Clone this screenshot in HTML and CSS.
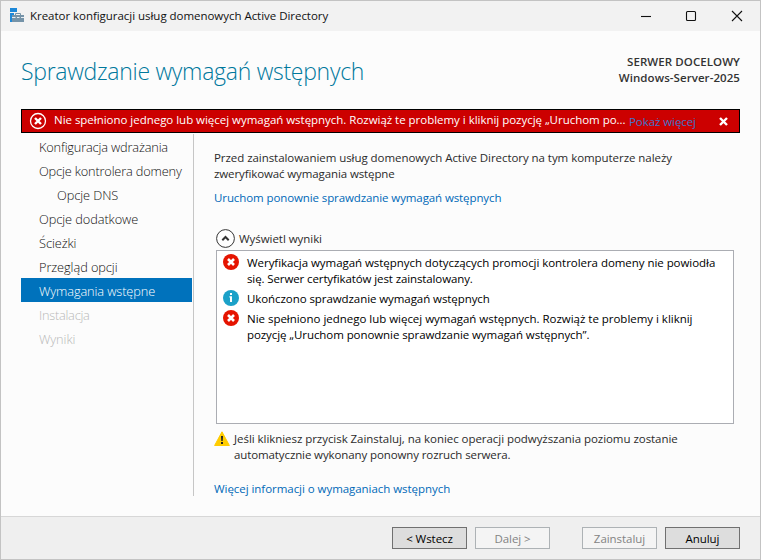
FILE: index.html
```html
<!DOCTYPE html>
<html lang="pl">
<head>
<meta charset="utf-8">
<title>Kreator konfiguracji usług domenowych Active Directory</title>
<link rel="stylesheet" href="styles.css">
</head>
<body>
<svg class="defs" width="0" height="0" aria-hidden="true">
  <symbol id="error" viewBox="0 0 16 16">
    <circle cx="8" cy="8" r="8" fill="#e51400"/>
    <path d="M5 5l6 6M11 5l-6 6" stroke="#fff" stroke-width="2.6"/>
  </symbol>
  <symbol id="info" viewBox="0 0 16 16">
    <circle cx="8" cy="8" r="8" fill="#1ba1c8"/>
    <path d="M7 3h2v2H7zM6.4 6.2H9V12H7V7.4h-.6z" fill="#fff"/>
  </symbol>
</svg>
<div class="window">
  <header class="titlebar">
    <svg class="app-icon" width="16" height="16" viewBox="0 0 16 16">
      <path d="M1 0h7v4H1zM1 5h4v9H1z" fill="#1e88d8"/>
      <path d="M3 7h12v7H3z" fill="#7593a8"/>
      <path d="M6.500 7V5.500h5V7" fill="none" stroke="#7593a8"/>
      <path d="M3 9.500h3.500M8 9.500h2.500M12 9.500h3" stroke="#e8eef3"/>
    </svg>
    <span class="caption">Kreator konfiguracji usług domenowych Active Directory</span>
    <div class="controls">
      <svg width="12" height="12" viewBox="0 0 12 12"><path d="M2 6.500h10"/></svg>
      <svg width="12" height="12" viewBox="0 0 12 12"><rect x="1.500" y="1.500" width="9" height="9" rx="1"/></svg>
      <svg width="12" height="12" viewBox="0 0 12 12"><path d="M1 1l10 10M11 1L1 11"/></svg>
    </div>
  </header>

  <div class="heading">
    <h1>Sprawdzanie wymagań wstępnych</h1>
    <div class="target"><span>SERWER DOCELOWY</span><span>Windows-Server-2025</span></div>
  </div>

  <div class="banner">
    <svg width="18" height="18" viewBox="0 0 18 18"><circle cx="9" cy="9" r="7.500" fill="none" stroke="#fff" stroke-width="1.300"/><path d="M6 6l6 6M12 6l-6 6" stroke="#fff" stroke-width="2.400"/></svg>
    <span class="banner-text">Nie spełniono jednego lub więcej wymagań wstępnych. Rozwiąż te problemy i kliknij pozycję „Uruchom po...</span>
    <a class="more">Pokaż więcej</a>
    <svg class="dismiss" width="9" height="9" viewBox="0 0 9 9"><path d="M1 1l7 7M8 1L1 8" stroke="#fff" stroke-width="2.400"/></svg>
  </div>

  <div class="main">
    <nav class="steps">
      <a class="tight">Konfiguracja wdrażania</a>
      <a class="tight">Opcje kontrolera domeny</a>
      <a class="sub">Opcje DNS</a>
      <a>Opcje dodatkowe</a>
      <a>Ścieżki</a>
      <a>Przegląd opcji</a>
      <a class="selected">Wymagania wstępne</a>
      <a class="disabled tighter">Instalacja</a>
      <a class="disabled">Wyniki</a>
    </nav>
    <section class="content">
      <p>Przed zainstalowaniem usług domenowych Active Directory na tym komputerze należy<br><span class="snug">zweryfikować wymagania wstępne</span></p>
      <a class="link rerun">Uruchom ponownie sprawdzanie wymagań wstępnych</a>
      <div class="expander">
        <svg width="19" height="19" viewBox="0 0 19 19"><circle cx="9.500" cy="9.500" r="8.900" fill="#fff" stroke="#333"/><path d="M6.300 11.200l3.200-3.200 3.200 3.200" fill="none" stroke="#333" stroke-width="2"/></svg>
        <span>Wyświetl wyniki</span>
      </div>
      <ul class="results">
        <li><svg width="16" height="16"><use href="#error"/></svg><span>Weryfikacja wymagań wstępnych dotyczących promocji kontrolera domeny nie powiodła<br><span class="snug">się. Serwer certyfikatów jest zainstalowany.</span></span></li>
        <li><svg width="16" height="16"><use href="#info"/></svg><span class="slight">Ukończono sprawdzanie wymagań wstępnych</span></li>
        <li><svg width="16" height="16"><use href="#error"/></svg><span><span class="wide">Nie spełniono jednego lub więcej wymagań wstępnych. Rozwiąż te problemy i kliknij</span><br><span class="slight">pozycję „Uruchom ponownie sprawdzanie wymagań wstępnych”.</span></span></li>
      </ul>
      <div class="warning">
        <svg width="16" height="16" viewBox="0 0 16 16"><path d="M8 .8L15.400 14.500H.6z" fill="#fc0" stroke="#fc0" stroke-linejoin="round"/><path d="M7 5h2l-.3 5H7.300zM7 11h2v2H7z" fill="#222"/></svg>
        <span>Jeśli klikniesz przycisk Zainstaluj, na koniec operacji podwyższania poziomu zostanie<br><span class="snug">automatycznie wykonany ponowny rozruch serwera.</span></span>
      </div>
      <a class="link">Więcej informacji o wymaganiach wstępnych</a>
    </section>
  </div>

  <footer class="footer">
    <button>&lt; Wstecz</button>
    <button disabled>Dalej &gt;</button>
    <button class="install" disabled>Zainstaluj</button>
    <button>Anuluj</button>
  </footer>
</div>
</body>
</html>
```
FILE: styles.css
```css
* { box-sizing: border-box; }
body {
  margin: 0;
  font: 11.5px/16px "Open Sans", "Noto Sans", sans-serif;
  letter-spacing: -0.048px;
  color: #2b2b2b;
}
.defs { position: absolute; }
svg { display: block; flex: none; }
.window {
  width: 761px;
  height: 560px;
  display: flex;
  flex-direction: column;
  border: 1px solid #c3c3c3;
  background: #fcfcfc;
  overflow: hidden;
  white-space: nowrap;
}
.titlebar {
  height: 30px;
  flex: none;
  display: flex;
  align-items: center;
  background: #f2f2f2;
  color: #111;
  padding: 0 17px 0 8px;
}
.app-icon { margin-right: 5px; }
.caption { letter-spacing: -0.035px; }
.controls { margin-left: auto; display: flex; gap: 34px; }
.controls svg { fill: none; stroke: #111; stroke-width: 1.1; }
.heading {
  height: 78px;
  flex: none;
  display: flex;
  justify-content: space-between;
  padding: 22px 20px 0 20px;
}
h1 {
  margin: 0;
  font-size: 23px;
  line-height: 36px;
  font-weight: 300;
  letter-spacing: -0.28px;
  color: #00789c;
}
.target {
  display: flex;
  flex-direction: column;
  align-items: flex-end;
  padding-top: 1px;
  font-weight: 600;
  letter-spacing: 0.07px;
  color: #333;
}
.banner {
  height: 24px;
  flex: none;
  margin: 0 20px;
  display: flex;
  align-items: center;
  border: 1px solid #000;
  background: #c00;
  color: #fff;
  padding: 0 11px 0 7px;
}
.banner-text { width: 572px; margin: -2px 3px 0 7px; letter-spacing: -0.025px; }
.more { color: #3f74c8; letter-spacing: -0.07px; margin-top: 2px; }
.dismiss { margin-left: auto; }
.main { flex: 1; display: flex; padding: 1px 0 0 20px; }
.steps {
  width: 173px;
  height: 362px;
  border-right: 1px solid #c6c6c6;
  padding-right: 1px;
  font-size: 12.77px;
  font-weight: 300;
  letter-spacing: -0.07px;
  color: #111;
}
.steps a { display: block; height: 24px; line-height: 24px; padding: 1px 0 0 18px; }
.steps .tight { letter-spacing: -0.16px; }
.steps .tighter { letter-spacing: -0.25px; }
.steps .sub { padding-left: 36px; }
.steps .selected { background: #0072bc; color: #fff; letter-spacing: -0.1px; }
.steps .disabled { color: #b8b8b8; }
.content { padding: 16px 0 0 20px; }
p { margin: 0; letter-spacing: -0.055px; }
.snug { letter-spacing: -0.11px; }
.slight { letter-spacing: -0.075px; }
.wide { letter-spacing: -0.022px; }
.link { display: block; color: #0069b8; }
.rerun { margin-top: 8px; letter-spacing: -0.1px; }
.expander { display: flex; align-items: center; height: 20px; margin: 22px 0 2px 2px; gap: 4px; }
.expander span { padding-top: 1px; }
.results {
  width: 518px;
  height: 174px;
  margin: 0 0 0 2px;
  padding: 3px 0 0 6px;
  list-style: none;
  border: 1px solid #abadb3;
  background: #fff;
  color: #000;
}
.results li { display: flex; gap: 8px; margin-bottom: 4px; }
.results li > span { padding-top: 1px; margin-bottom: -1px; }
.warning { display: flex; gap: 4px; margin: 7px 0 18px; }
.footer {
  height: 43px;
  flex: none;
  display: flex;
  justify-content: flex-end;
  gap: 8px;
  padding: 10px 20px 0 0;
  border-top: 1px solid #d7d7d7;
  background: #efefef;
}
button {
  width: 75px;
  height: 22px;
  padding: 1px 0 0;
  border: 1px solid #707070;
  background: #ddd;
  color: #000;
  font: inherit;
  line-height: 20px;
  letter-spacing: -0.05px;
}
button:disabled { border-color: #adb2b5; background: #f4f4f4; color: #838383; }
.install { margin-left: 24px; }
```
